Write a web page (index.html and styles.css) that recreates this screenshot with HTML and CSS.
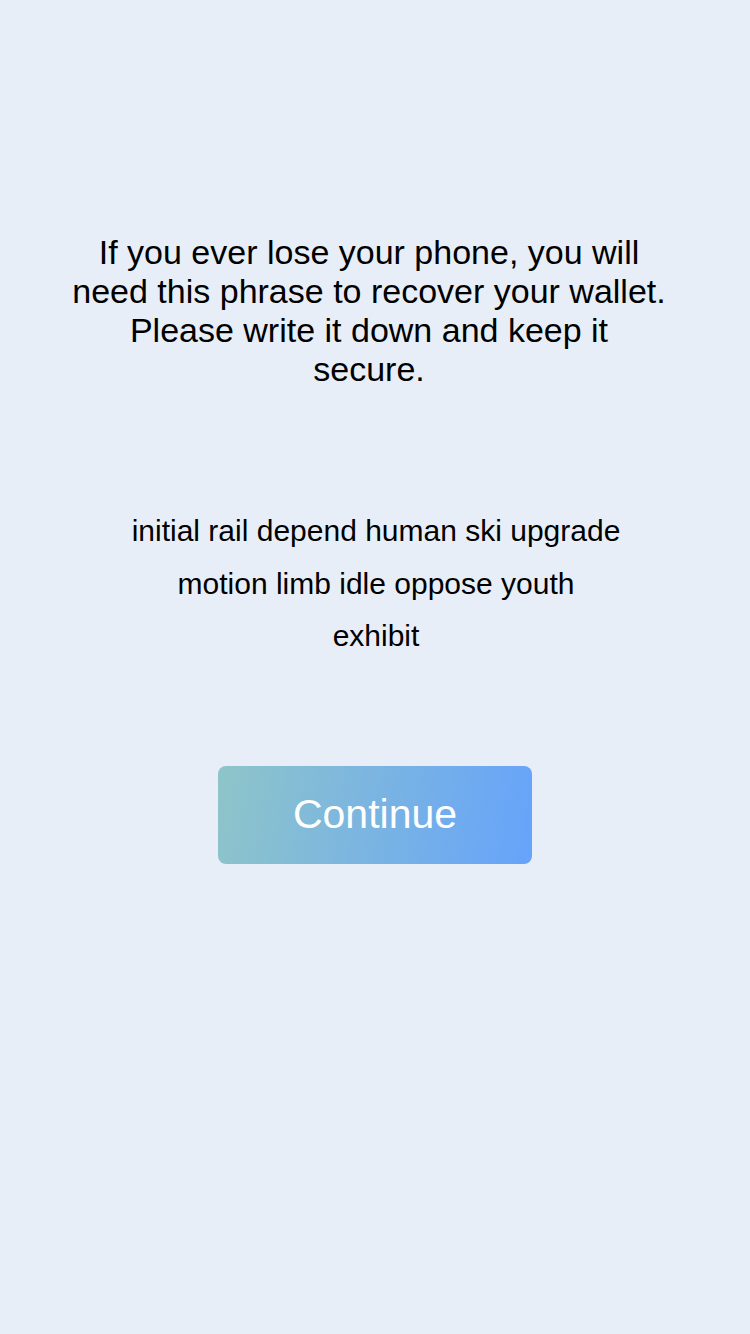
FILE: index.html
```html
<!DOCTYPE html>
<html>
<head>
<meta charset="utf-8">
<link rel="stylesheet" href="styles.css">
</head>
<body>
<main class="screen">
  <p class="intro">If you ever lose your phone, you will need this phrase to recover your wallet. Please write it down and keep it secure.</p>
  <p class="phrase">initial rail depend human ski upgrade motion limb idle oppose youth exhibit</p>
  <button class="continue">Continue</button>
</main>
</body>
</html>
```
FILE: styles.css
```css
html, body {
  margin: 0;
  padding: 0;
  background: #e8eef7;
}
.screen {
  width: 750px;
  height: 1334px;
  display: flex;
  flex-direction: column;
  align-items: center;
  font-family: "Liberation Sans", Arial, sans-serif;
  color: #000;
}
.intro {
  box-sizing: border-box;
  width: 750px;
  margin: 233px 0 0 0;
  padding: 0 83px 0 71px;
  font-size: 34px;
  line-height: 39px;
  text-align: center;
}
.phrase {
  box-sizing: border-box;
  width: 750px;
  margin: 116px 0 0 0;
  padding: 0 129px 0 131px;
  font-size: 30px;
  line-height: 52.5px;
  text-align: center;
}
.continue {
  margin-top: 103px;
  width: 314px;
  height: 98px;
  border: none;
  border-radius: 8px;
  background: linear-gradient(100deg, #8ec5c9 0%, #66a3fb 100%);
  color: #fff;
  font-family: "Liberation Sans", Arial, sans-serif;
  font-size: 41px;
  padding: 0;
}
```
